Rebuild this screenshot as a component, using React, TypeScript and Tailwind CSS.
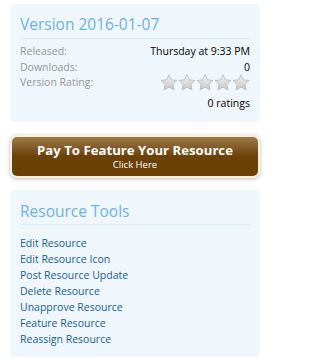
import React from 'react';

const font = { fontFamily: '"Open Sans", "DejaVu Sans", sans-serif' };

function Star() {
  return (
    <svg width="18" height="17" viewBox="0 0 24 23">
      <defs>
        <linearGradient id="starFill" x1="0" y1="0" x2="0" y2="1">
          <stop offset="0%" stopColor="#f4f4f4" />
          <stop offset="100%" stopColor="#c6c6c6" />
        </linearGradient>
      </defs>
      <path
        d="M12 1l3.3 6.8 7.5 1-5.5 5.2 1.4 7.4L12 17.8l-6.7 3.6 1.4-7.4L1.2 8.8l7.5-1z"
        fill="url(#starFill)"
        stroke="#b0b0b0"
        strokeWidth="1"
        strokeLinejoin="round"
      />
    </svg>
  );
}

const tools = [
  'Edit Resource',
  'Edit Resource Icon',
  'Post Resource Update',
  'Delete Resource',
  'Unapprove Resource',
  'Feature Resource',
  'Reassign Resource',
];

export default function App() {
  return (
    <div className="w-[267px] h-[360px] bg-white overflow-hidden pt-[4px] pl-[10px] pr-[7px]" style={font}>
      {/* Version info */}
      <div className="bg-[#f0f7fc] rounded-[5px] px-[10px] pt-[9px] pb-[10px]">
        <h3 className="text-[15.5px] leading-[22px] text-[#6cb2e4] pb-[3px] border-b border-[#d7edfc]">
          Version 2016-01-07
        </h3>
        <dl className="mt-[5px] text-[10.5px] leading-[15.5px]">
          <div className="flex justify-between">
            <dt className="text-[#969696]">Released:</dt>
            <dd className="text-black">Thursday at 9:33 PM</dd>
          </div>
          <div className="flex justify-between">
            <dt className="text-[#969696]">Downloads:</dt>
            <dd className="text-black">0</dd>
          </div>
          <div className="flex justify-between items-start">
            <dt className="text-[#969696]">Version Rating:</dt>
            <dd className="flex flex-col items-end">
              <div className="flex mt-[-1px]">
                <Star />
                <Star />
                <Star />
                <Star />
                <Star />
              </div>
              <span className="text-black mt-[5px]">0 ratings</span>
            </dd>
          </div>
        </dl>
      </div>

      {/* Feature button */}
      <div className="mt-[13px] rounded-[7px] bg-[#f8f0d8] p-[2px] shadow-[0_1px_4px_rgba(0,0,0,0.25)]">
        <div className="rounded-[5px] bg-gradient-to-b from-[#a07a4a] via-[#6b4106] to-[#6b4106] h-[39px] flex flex-col items-center justify-center text-white">
          <span className="text-[13.2px] leading-[16px] font-bold">Pay To Feature Your Resource</span>
          <span className="text-[9.5px] leading-[12px] mt-[1px]">Click Here</span>
        </div>
      </div>

      {/* Resource tools */}
      <div className="mt-[12px] bg-[#f0f7fc] rounded-[5px] px-[10px] pt-[10px] pb-[10px]">
        <h3 className="text-[15.5px] leading-[22px] text-[#6cb2e4] pb-[2px] border-b border-[#d7edfc]">
          Resource Tools
        </h3>
        <ul className="mt-[10px] text-[10.5px] leading-[16px] text-[#176093]">
          {tools.map((t) => (
            <li key={t}>{t}</li>
          ))}
        </ul>
      </div>
    </div>
  );
}
